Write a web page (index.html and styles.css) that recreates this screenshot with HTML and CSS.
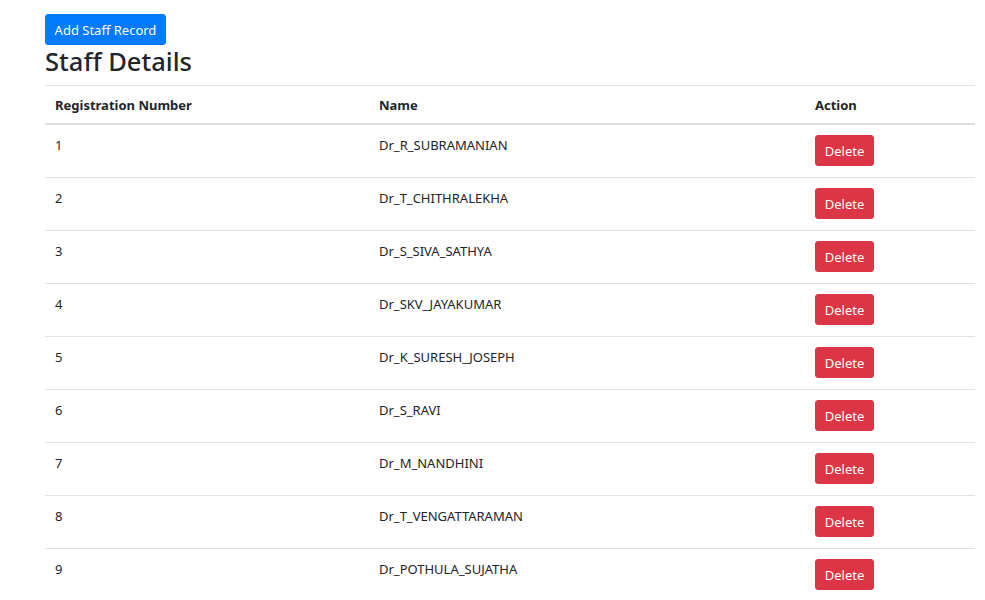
FILE: index.html
```html
<!DOCTYPE html>
<html lang="en">
<head>
<meta charset="utf-8">
<title>Staff Details</title>
<link rel="stylesheet" href="styles.css">
</head>
<body>
<div class="container">
  <button class="btn btn-primary">Add Staff Record</button>
  <h2 class="title">Staff Details</h2>
  <table class="table">
    <thead>
      <tr><th class="c1">Registration Number</th><th class="c2">Name</th><th class="c3">Action</th></tr>
    </thead>
    <tbody>
      <tr><td>1</td><td>Dr_R_SUBRAMANIAN</td><td><button class="btn btn-danger">Delete</button></td></tr>
      <tr><td>2</td><td>Dr_T_CHITHRALEKHA</td><td><button class="btn btn-danger">Delete</button></td></tr>
      <tr><td>3</td><td>Dr_S_SIVA_SATHYA</td><td><button class="btn btn-danger">Delete</button></td></tr>
      <tr><td>4</td><td>Dr_SKV_JAYAKUMAR</td><td><button class="btn btn-danger">Delete</button></td></tr>
      <tr><td>5</td><td>Dr_K_SURESH_JOSEPH</td><td><button class="btn btn-danger">Delete</button></td></tr>
      <tr><td>6</td><td>Dr_S_RAVI</td><td><button class="btn btn-danger">Delete</button></td></tr>
      <tr><td>7</td><td>Dr_M_NANDHINI</td><td><button class="btn btn-danger">Delete</button></td></tr>
      <tr><td>8</td><td>Dr_T_VENGATTARAMAN</td><td><button class="btn btn-danger">Delete</button></td></tr>
      <tr><td>9</td><td>Dr_POTHULA_SUJATHA</td><td><button class="btn btn-danger">Delete</button></td></tr>
    </tbody>
  </table>
</div>
</body>
</html>
```
FILE: styles.css
```css
* { box-sizing: border-box; }
html, body { margin: 0; padding: 0; background: #fff; }
body {
  font-family: "Noto Sans", "Open Sans", sans-serif;
  font-size: 13px;
  line-height: 20px;
  color: #212529;
}
.container {
  width: 930px;
  margin-left: 45px;
  padding-top: 14px;
}
.btn {
  display: block;
  font-family: inherit;
  font-size: 13px;
  line-height: 17px;
  height: 31px;
  padding: 7px 0 5px;
  border: 1px solid transparent;
  border-radius: 3px;
  color: #fff;
  white-space: nowrap;
  text-align: center;
  cursor: pointer;
}
.btn-primary { background: #007bff; border-color: #007bff; width: 121px; }
.btn-danger { background: #dc3545; border-color: #dc3545; width: 59px; }
.title {
  margin: 0 0 7px 0;
  font-size: 25.5px;
  font-weight: 500;
  line-height: 33px;
}
.table {
  width: 930px;
  border-collapse: collapse;
}
.table th, .table td {
  text-align: left;
  vertical-align: top;
  padding: 10px 10px;
  border-top: 1px solid #dee2e6;
}
.table th {
  font-weight: 700;
  padding-top: 9px;
  padding-bottom: 8px;
  border-bottom: 2px solid #dee2e6;
}
.table td { padding-top: 10px; padding-bottom: 11px; }
.c1 { width: 324px; }
.c2 { width: 436px; }
.c3 { width: 170px; }
```
